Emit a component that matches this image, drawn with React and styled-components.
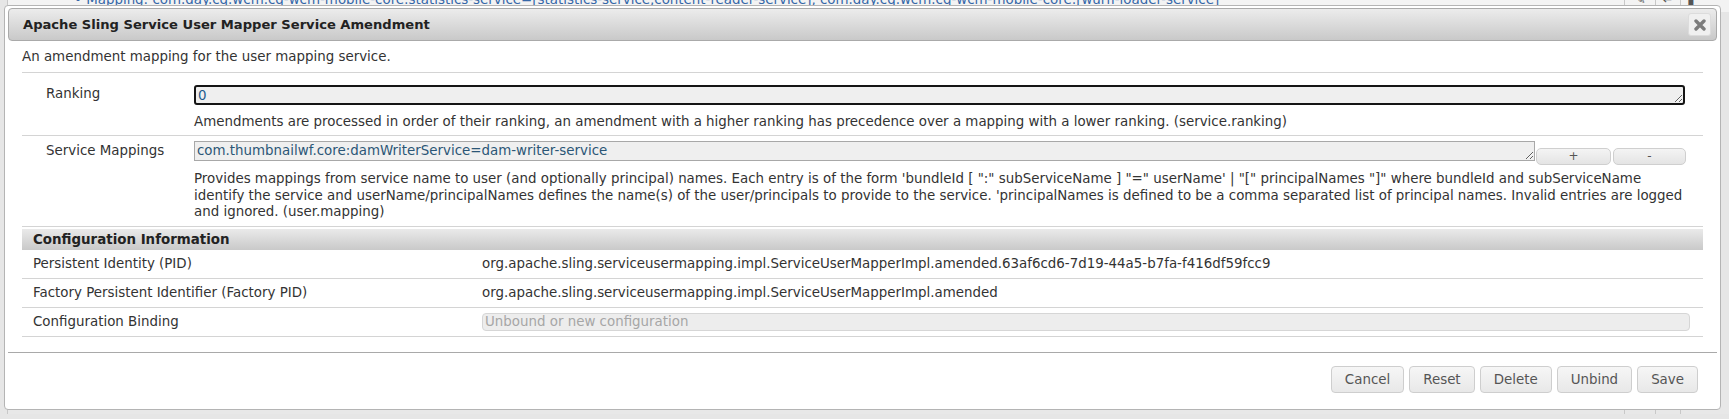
import React from 'react';
import styled, { createGlobalStyle } from 'styled-components';

const GlobalStyle = createGlobalStyle`
  html, body {
    margin: 0;
    padding: 0;
  }
  body {
    font-family: "DejaVu Sans", Verdana, sans-serif;
    font-size: 13.4px;
    color: #333;
    background: #e6e6e6;
  }
`;

const Screen = styled.div`
  position: relative;
  width: 1729px;
  height: 419px;
  overflow: hidden;
  display: flex;
  flex-direction: column;
  justify-content: space-between;
`;

const BackRow = styled.div`
  display: flex;
  align-items: center;
  height: 24px;
  line-height: 24px;
  margin-top: ${props => (props.$top ? '-12px' : '0')};
  margin-bottom: ${props => (props.$top ? '0' : '5px')};
  background: ${props => (props.$top ? '#f3f3f3' : '#e8e8e8')};
  border-left: 1px solid #c8c8c8;
  margin-left: 7px;
  padding-left: 6px;
`;

const BackText = styled.span`
  flex: 1;
  padding-left: 60px;
  color: ${props => props.$color};
  white-space: nowrap;
  overflow: hidden;
`;

const BackCells = styled.div`
  display: flex;
  height: 100%;
  margin-right: 28px;
`;

const BackCell = styled.div`
  width: ${props => props.$w}px;
  border-left: 1px solid #c8c8c8;
  display: flex;
  align-items: center;
  justify-content: center;
  color: #555;
`;

const Dialog = styled.div`
  position: absolute;
  top: 5px;
  left: 4px;
  width: 1717px;
  height: 405px;
  box-sizing: border-box;
  padding: 2px 3px 3px;
  background: #fff;
  border: 1px solid #b4b4b4;
  border-radius: 4px;
  display: flex;
  flex-direction: column;
`;

const TitleBar = styled.div`
  height: 33px;
  box-sizing: border-box;
  display: flex;
  align-items: center;
  justify-content: space-between;
  padding: 0 5px 0 14px;
  border: 1px solid #aaa;
  border-radius: 4px;
  background: linear-gradient(#ececec, #c9c9c9);
`;

const Title = styled.span`
  font-size: 13.1px;
  font-weight: bold;
  color: #222;
`;

const CloseButton = styled.button`
  width: 23px;
  height: 23px;
  padding: 0;
  display: flex;
  align-items: center;
  justify-content: center;
  border: 1px solid #dcdcdc;
  border-radius: 3px;
  background: #f0f0f0;
`;

const Content = styled.div`
  padding: 0 14px;
`;

const Description = styled.p`
  margin: 8px 0 7px;
  line-height: 16px;
`;

const FormTable = styled.div`
  border-bottom: 1px solid #d4d4d4;
`;

const FormRow = styled.div`
  display: grid;
  grid-template-columns: 172px 1fr;
  border-top: 1px solid #d4d4d4;
  padding: ${props => props.$pad};
`;

const FieldLabel = styled.div`
  padding-left: 24px;
  padding-top: ${props => props.$pt}px;
  line-height: 16px;
`;

const FieldBody = styled.div`
  display: flex;
  flex-direction: column;
`;

const InputLine = styled.div`
  display: flex;
  align-items: flex-start;
`;

const TextBox = styled.textarea`
  width: ${props => props.$w}px;
  height: ${props => props.$h}px;
  box-sizing: border-box;
  margin: 0;
  padding: 1px 2px;
  font-family: "DejaVu Sans", Verdana, sans-serif;
  font-size: 13.4px;
  line-height: 16px;
  color: ${props => props.$color};
  background: #efefef;
  border: ${props => props.$border};
  border-radius: ${props => props.$radius}px;
  outline: none;
  overflow: hidden;
`;

const SmallButton = styled.button`
  width: ${props => props.$w}px;
  height: 17px;
  margin: 7px 0 0 ${props => props.$ml}px;
  padding: 0;
  font-family: "DejaVu Sans", Verdana, sans-serif;
  font-size: 12px;
  line-height: 15px;
  color: #555;
  background: linear-gradient(#f4f4f4, #e4e4e4);
  border: 1px solid #cfcfcf;
  border-radius: 5px;
`;

const Help = styled.div`
  margin-top: ${props => props.$mt}px;
  max-width: ${props => props.$max}px;
  line-height: ${props => props.$lh}px;
`;

const SectionHeader = styled.div`
  margin-top: 2px;
  height: 21px;
  line-height: 21px;
  padding-left: 11px;
  font-weight: bold;
  color: #222;
  background: linear-gradient(#eaeaea, #c9c9c9);
`;

const InfoRow = styled.div`
  display: grid;
  grid-template-columns: 460px 1fr;
  align-items: center;
  height: 29px;
  box-sizing: border-box;
  border-bottom: 1px solid #d4d4d4;
`;

const InfoLabel = styled.div`
  padding-left: 11px;
`;

const InfoValue = styled.div`
  padding-right: 13px;
  white-space: nowrap;
`;

const DisabledInput = styled.input`
  width: 100%;
  height: 18px;
  box-sizing: border-box;
  margin: 0;
  padding: 0 2px;
  font-family: "DejaVu Sans", Verdana, sans-serif;
  font-size: 13.4px;
  color: #a6a6a6;
  background: #ededed;
  border: 1px solid #d6d6d6;
  border-radius: 4px;
`;

const ButtonPane = styled.div`
  margin-top: 15px;
  border-top: 1px solid #a9a9a9;
  padding: 13px 19px 0 0;
  display: flex;
  justify-content: flex-end;
  gap: 5px;
`;

const PaneButton = styled.button`
  height: 27px;
  padding: 0 13px;
  font-family: "DejaVu Sans", Verdana, sans-serif;
  font-size: 13.4px;
  color: #555;
  background: linear-gradient(#f6f6f6, #e8e8e8);
  border: 1px solid #cecece;
  border-radius: 4px;
`;

const CloseIcon = () => (
  <svg width="12" height="12" viewBox="0 0 12 12">
    <path d="M2 2 L10 10 M10 2 L2 10" stroke="#7c7c7c" strokeWidth="3.4" strokeLinecap="round" />
  </svg>
);

const mappingText =
  'Mapping: com.day.cq.wcm.cq-wcm-mobile-core:statistics-service=[statistics-service,content-reader-service], com.day.cq.wcm.cq-wcm-mobile-core:[wurfl-loader-service]';

const infoRows = [
  ['Persistent Identity (PID)', 'org.apache.sling.serviceusermapping.impl.ServiceUserMapperImpl.amended.63af6cd6-7d19-44a5-b7fa-f416df59fcc9'],
  ['Factory Persistent Identifier (Factory PID)', 'org.apache.sling.serviceusermapping.impl.ServiceUserMapperImpl.amended'],
];

export default function App() {
  return (
    <Screen>
      <GlobalStyle />
      <BackRow $top>
        <BackText $color="#3567a8">• {mappingText}</BackText>
        <BackCells>
          <BackCell $w={30}>✎</BackCell>
          <BackCell $w={24}>↩</BackCell>
          <BackCell $w={20}>▮</BackCell>
        </BackCells>
      </BackRow>
      <BackRow>
        <BackText $color="#777">• Mapping: com.day.cq.wcm.cq-wcm-mobile-core:statistics-service=[statistics-service]</BackText>
        <BackCells>
          <BackCell $w={30}>✎</BackCell>
          <BackCell $w={24}>↩</BackCell>
          <BackCell $w={20}>▮</BackCell>
        </BackCells>
      </BackRow>

      <Dialog>
        <TitleBar>
          <Title>Apache Sling Service User Mapper Service Amendment</Title>
          <CloseButton aria-label="close">
            <CloseIcon />
          </CloseButton>
        </TitleBar>

        <Content>
          <Description>An amendment mapping for the user mapping service.</Description>

          <FormTable>
            <FormRow $pad="12px 0 5px">
              <FieldLabel $pt={1}>Ranking</FieldLabel>
              <FieldBody>
                <TextBox
                  readOnly
                  value="0"
                  $w={1491}
                  $h={20}
                  $color="#1d5b8c"
                  $border="2px solid #151515"
                  $radius={3}
                />
                <Help $lh={16} $mt={9}>
                  Amendments are processed in order of their ranking, an amendment with a higher ranking has precedence over a mapping with a lower ranking. (service.ranking)
                </Help>
              </FieldBody>
            </FormRow>

            <FormRow $pad="5px 0 5px">
              <FieldLabel $pt={2}>Service Mappings</FieldLabel>
              <FieldBody>
                <InputLine>
                  <TextBox
                    readOnly
                    value="com.thumbnailwf.core:damWriterService=dam-writer-service"
                    $w={1341}
                    $h={20}
                    $color="#2b5676"
                    $border="1px solid #a8a8a8"
                    $radius={0}
                  />
                  <SmallButton $w={75} $ml={1}>+</SmallButton>
                  <SmallButton $w={73} $ml={2}>-</SmallButton>
                </InputLine>
                <Help $lh={16.5} $mt={6} $max={1494}>
                  Provides mappings from service name to user (and optionally principal) names. Each entry is of the form 'bundleId [ ":" subServiceName ] "=" userName' | "[" principalNames "]" where bundleId and subServiceName identify the service and userName/principalNames defines the name(s) of the user/principals to provide to the service. 'principalNames is defined to be a comma separated list of principal names. Invalid entries are logged and ignored. (user.mapping)
                </Help>
              </FieldBody>
            </FormRow>
          </FormTable>

          <SectionHeader>Configuration Information</SectionHeader>
          {infoRows.map(([label, value]) => (
            <InfoRow key={label}>
              <InfoLabel>{label}</InfoLabel>
              <InfoValue>{value}</InfoValue>
            </InfoRow>
          ))}
          <InfoRow>
            <InfoLabel>Configuration Binding</InfoLabel>
            <InfoValue>
              <DisabledInput disabled value="Unbound or new configuration" readOnly />
            </InfoValue>
          </InfoRow>
        </Content>

        <ButtonPane>
          <PaneButton>Cancel</PaneButton>
          <PaneButton>Reset</PaneButton>
          <PaneButton>Delete</PaneButton>
          <PaneButton>Unbind</PaneButton>
          <PaneButton>Save</PaneButton>
        </ButtonPane>
      </Dialog>
    </Screen>
  );
}
